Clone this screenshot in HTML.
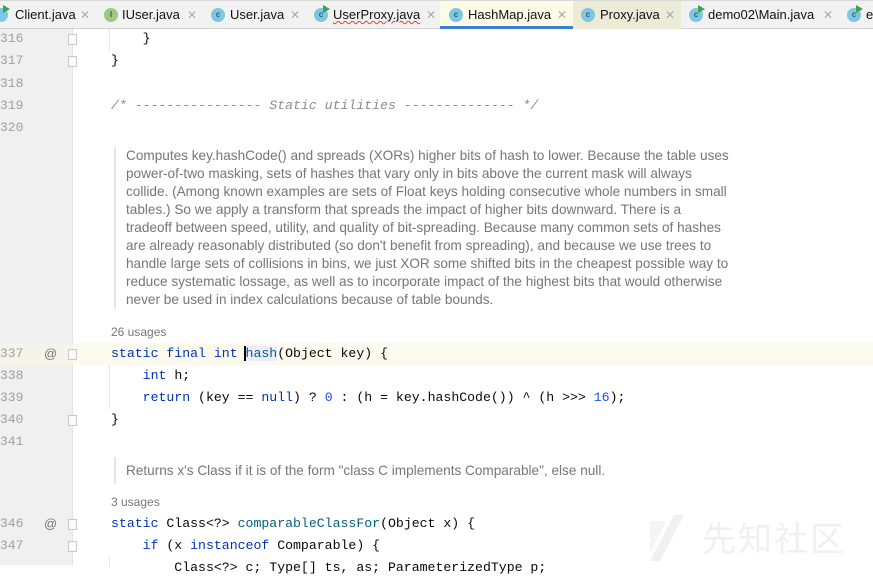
<!DOCTYPE html>
<html><head><meta charset="utf-8"><style>
*{margin:0;padding:0;box-sizing:border-box}
body{width:873px;height:565px;overflow:hidden;background:#fff;position:relative;font-family:"Liberation Sans",sans-serif}
.tabs{position:absolute;left:0;top:0;width:873px;height:29px;background:#f2f2f2;border-top:1px solid #d8d8d8;border-bottom:1px solid #d0d0d0}
.t{position:absolute;top:0;height:28px;font-size:13px;color:#111;line-height:28px;white-space:nowrap}
.ic{position:absolute;top:7px;width:14px;height:14px;border-radius:50%;background:#7fc6e0;font-size:8px;line-height:14px;text-align:center;color:#2a5f77;font-weight:bold}
.ic.i{background:#9bc98a;color:#3c6a2c}
.run::after{content:"";position:absolute;left:9px;top:-3px;border-left:7px solid #3da34a;border-top:4px solid transparent;border-bottom:4px solid transparent}
.x{position:absolute;top:0;line-height:28px;color:#aaa;font-size:12px}
.gut{position:absolute;left:0;top:29px;width:73px;height:536px;background:#f0f0f0;border-right:1px solid #e2e2e2}
.ln{position:absolute;left:0;font-family:"Liberation Mono",monospace;font-size:13px;color:#a0a0a0;line-height:22px;height:22px}
.fold{position:absolute;left:68px;width:9px;height:11px;border:1px solid #c8c8c8;background:#fafafa}
.code{position:absolute;left:111px;font-family:"Liberation Mono",monospace;font-size:13.2px;line-height:22px;height:22px;color:#080808;white-space:pre}
.k{color:#0033b3}.n{color:#1750eb}.c{color:#8c8c8c;font-style:italic}
.doc{position:absolute;left:114px;border-left:2px solid #e5e5e5;padding-left:10px;font-size:13.6px;color:#767676;line-height:18px;white-space:nowrap}
.us{position:absolute;left:111px;font-size:12px;color:#777}
.at{position:absolute;left:44px;font-size:13px;color:#777}
</style></head><body>
<div class="tabs">
 <span class="ic run" style="left:-6px"></span><span class="t" style="left:15px">Client.java</span><span class="x" style="left:80px">✕</span>
 <span class="ic i" style="left:104px">I</span><span class="t" style="left:122px">IUser.java</span><span class="x" style="left:187px">✕</span>
 <span class="ic" style="left:211px">c</span><span class="t" style="left:230px">User.java</span><span class="x" style="left:290px">✕</span>
 <span class="ic run" style="left:314px">c</span><span class="t" style="left:333px;text-decoration:underline wavy #e04040;text-decoration-thickness:1px">UserProxy.java</span><span class="x" style="left:426px">✕</span>
 <div style="position:absolute;left:440px;top:0;width:133px;height:28px;background:#fbfbe6;border-bottom:3px solid #3d7fd1"></div>
 <span class="ic" style="left:449px">c</span><span class="t" style="left:468px">HashMap.java</span><span class="x" style="left:557px">✕</span>
 <div style="position:absolute;left:573px;top:0;width:108px;height:28px;background:#ececd6"></div>
 <span class="ic" style="left:581px">c</span><span class="t" style="left:600px">Proxy.java</span><span class="x" style="left:665px">✕</span>
 <span class="ic run" style="left:689px">c</span><span class="t" style="left:708px">demo02\Main.java</span><span class="x" style="left:823px">✕</span>
 <span class="ic run" style="left:847px">c</span><span class="t" style="left:866px">e</span>
</div>
<div style="position:absolute;left:0;top:343px;width:873px;height:22px;background:#fcfaed"></div>
<div class="gut"></div>
<div style="position:absolute;left:0;top:343px;width:73px;height:22px;background:#f6f4e8"></div>
<div class="ln" style="top:28px">316</div><div class="fold" style="top:34px"></div>
<div class="ln" style="top:50px">317</div><div class="fold" style="top:56px"></div>
<div class="ln" style="top:73px">318</div>
<div class="ln" style="top:95px">319</div>
<div class="ln" style="top:117px">320</div>
<div class="ln" style="top:343px">337</div><div class="at" style="top:346px">@</div><div class="fold" style="top:349px"></div>
<div class="ln" style="top:365px">338</div>
<div class="ln" style="top:387px">339</div>
<div class="ln" style="top:409px">340</div><div class="fold" style="top:415px"></div>
<div class="ln" style="top:431px">341</div>
<div class="ln" style="top:513px">346</div><div class="at" style="top:516px">@</div><div class="fold" style="top:519px"></div>
<div class="ln" style="top:535px">347</div><div class="fold" style="top:541px"></div>
<div style="position:absolute;left:109px;top:29px;width:1px;height:22px;background:#e6e6e6"></div>
<div style="position:absolute;left:109px;top:365px;width:1px;height:44px;background:#e6e6e6"></div>
<div style="position:absolute;left:109px;top:557px;width:1px;height:10px;background:#e6e6e6"></div>
<div class="code" style="top:28px">    }</div>
<div class="code" style="top:50px">}</div>
<div class="code c" style="top:95px">/* ---------------- Static utilities -------------- */</div>
<div class="doc" style="top:147px">Computes key.hashCode() and spreads (XORs) higher bits of hash to lower. Because the table uses<br>power-of-two masking, sets of hashes that vary only in bits above the current mask will always<br>collide. (Among known examples are sets of Float keys holding consecutive whole numbers in small<br>tables.) So we apply a transform that spreads the impact of higher bits downward. There is a<br>tradeoff between speed, utility, and quality of bit-spreading. Because many common sets of hashes<br>are already reasonably distributed (so don't benefit from spreading), and because we use trees to<br>handle large sets of collisions in bins, we just XOR some shifted bits in the cheapest possible way to<br>reduce systematic lossage, as well as to incorporate impact of the highest bits that would otherwise<br>never be used in index calculations because of table bounds.</div>
<div class="us" style="top:325px">26 usages</div>
<div class="code" style="top:343px"><span class="k">static final int</span> <span style="border-left:2px solid #000;margin-left:-2px;background:#edebfc;color:#00627a">hash</span>(Object key) {</div>
<div class="code" style="top:365px">    <span class="k">int</span> h;</div>
<div class="code" style="top:387px">    <span class="k">return</span> (key == <span class="k">null</span>) ? <span class="n">0</span> : (h = key.hashCode()) ^ (h &gt;&gt;&gt; <span class="n">16</span>);</div>
<div class="code" style="top:409px">}</div>
<div class="doc" style="top:457px;height:27px;line-height:27px">Returns x's Class if it is of the form "class C implements Comparable", else null.</div>
<div class="us" style="top:495px">3 usages</div>
<div class="code" style="top:513px"><span class="k">static</span> Class&lt;?&gt; <span style="color:#00627a">comparableClassFor</span>(Object x) {</div>
<div class="code" style="top:535px">    <span class="k">if</span> (x <span class="k">instanceof</span> Comparable) {</div>
<div class="code" style="top:557px">        Class&lt;?&gt; c; Type[] ts, as; ParameterizedType p;</div>
<svg style="position:absolute;left:650px;top:513px" width="40" height="48"><polygon points="0,48 10,48 34,2 24,2" fill="#f0f0f0"/><polygon points="0,8 16,8 0,40" fill="#f4f4f4"/></svg>
<div style="position:absolute;left:702px;top:512px;font-family:'Noto Sans CJK SC',sans-serif;font-size:34px;color:#f0f0f0;letter-spacing:2px">先知社区</div>
</body></html>
